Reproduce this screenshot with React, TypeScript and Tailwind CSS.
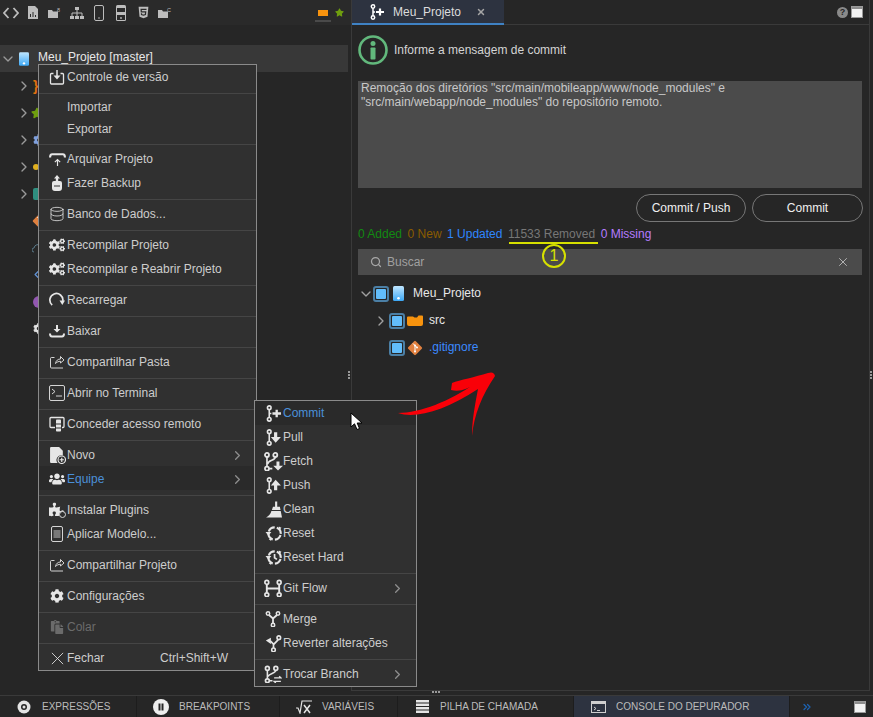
import React from "react";
import { ChevronRight, ChevronDown, ChevronsRight, Database, X, Search } from "lucide-react";
import { FaCogs, FaCog, FaUsers, FaPuzzlePiece, FaPaste, FaHtml5, FaStar } from "react-icons/fa";

const S = ({ children, size = 16, className = "" }: { children: React.ReactNode; size?: number; className?: string }) => (
  <svg width={size} height={size} viewBox="0 0 16 16" fill="none" stroke="currentColor" strokeWidth="1.3" className={`shrink-0 ${className}`}>
    {children}
  </svg>
);
const N = ({ x, y }: { x: number; y: number }) => <circle cx={x} cy={y} r="1.7" strokeWidth="1.5" />;
const Filled = ({ d }: { d: string }) => <path d={d} fill="currentColor" stroke="none" />;

const GitCommit = ({ size = 17 }: { size?: number }) => (
  <S size={size}><N x={4} y={2.5} /><N x={4} y={13.5} /><path d="M4 4.200v7.600M4 8h2" strokeWidth="1.500" /><path d="M7 8h8M11 4.500v7" strokeWidth="2.200" /></S>
);
const GitPull = () => (
  <S size={17}><N x={4} y={2.5} /><N x={4} y={13.5} /><path d="M4 4.200v7.600" strokeWidth="1.500" /><Filled d="M8.500 3h3v4.500H15L10 13 5.500 7.500h3z" /></S>
);
const GitPush = () => (
  <S size={17}><N x={4} y={2.5} /><N x={4} y={13.5} /><path d="M4 4.200v7.600" strokeWidth="1.500" /><Filled d="M10 2.500l5 5.500h-3.500v4.500h-3V8H5.500z" /></S>
);
const GitFetch = () => (
  <S size={19}><N x={2.5} y={2.5} /><N x={2.5} y={14} /><N x={9.500} y={2.5} /><path d="M2.500 4.200v8.100M4.300 14H7M9.500 4.200c0 3.500-6 2-6.500 6" strokeWidth="1.400" /><Filled d="M10.500 8h2.500v3.500H16l-4.200 4-4-4h2.700z" /></S>
);
const Broom = () => (
  <S size={17}><Filled d="M9.500 .5h2v5h2.500l.6 3H6.500L7.500 5.500h2zM6 9.500h8.800L16 15.500H1C3.500 14 5.500 12.500 6 9.500z" /></S>
);
const Reset = ({ hard }: { hard?: boolean }) => (
  <S size={17}>
    <circle cx="9" cy="8" r="5.800" strokeWidth="2" strokeDasharray="7 2.100" transform="rotate(15 9 8)" />
    <Filled d="M.5 6.500h5.500L3.200 10zM13 1.500l2.500 1-2 2.500zM6 12l-.2 3-2.300-1.500z" />
    {hard && <path d="M9 4.800v3.400l2.200 1.600" strokeWidth="1.600" />}
  </S>
);
const GitFlowI = () => (
  <S size={18}><N x={2.5} y={3} /><N x={2.5} y={14} /><N x={13.5} y={3} /><N x={13.5} y={14} /><path d="M2.500 4.700v7.600M13.500 4.700v7.600M2.500 8.500h11" strokeWidth="1.700" /></S>
);
const Merge = () => (
  <S><N x={3} y={2.5} /><N x={13} y={2.5} /><N x={8} y={14} /><path d="M4 4L8 7.500l4-3.500M8 7.500v4.800" strokeWidth="1.800" /></S>
);
const Revert = () => (
  <S size={17}><N x={13} y={2.500} /><N x={8} y={14} /><path d="M12.500 4.300L8 9v3.300M8 8.500L5 5.500" strokeWidth="1.600" /><Filled d="M5.500 2.500v6L.800 5.200z" /></S>
);
const Switch = () => (
  <S size={18}><N x={3} y={3} /><N x={3} y={14} /><N x={10.500} y={3} /><path d="M3 4.700v7.600M10.500 4.700c0 3-6 2.500-7 5.500M5 14h2.500" strokeWidth="1.400" /><path d="M9 11.500h6l-1.500-1.500M15 14.500H9l1.500 1.500" strokeWidth="1.200" /></S>
);

const ControleI = () => (
  <S size={16}><path d="M4.500 4.500H2.500a1 1 0 0 0-1 1V14a1 1 0 0 0 1 1h11a1 1 0 0 0 1-1V5.500a1 1 0 0 0-1-1H11.500" /><path d="M8 1v6" strokeWidth="1.500" /><Filled d="M4.500 6.500h7L8 10.500z" /></S>
);
const ArquivarI = () => (
  <S size={17}><path d="M1 6c0-2 .5-3 2-3h10c1.500 0 2 1 2 3" strokeWidth="2" /><path d="M8 8v6M5.500 10.500L8 8l2.500 2.500" strokeWidth="1.100" /></S>
);
const BackupI = () => (
  <S><Filled d="M8 0l3 3.500H9.200V6H11a2 2 0 0 1 2 2v5a3 3 0 0 1-3 3H6a3 3 0 0 1-3-3V8a2 2 0 0 1 2-2h1.800V3.500H5z" /><path d="M5 11h6" stroke="#303030" strokeWidth="1" /></S>
);
const ReloadI = () => (
  <S size={16}><path d="M3.200 13A6.500 6.500 0 1 1 13.800 9" strokeWidth="1.700" /><Filled d="M10.500 8.500h5.500l-2.700 4.500z" /></S>
);
const BaixarI = () => (
  <S><Filled d="M7 2h2v4h2.500L8 9.500 4.500 6H7z" /><path d="M1 10.500c0 2 .5 3 2 3h10c1.500 0 2-1 2-3" strokeWidth="2" /></S>
);
const ShareI = () => (
  <S size={16}><path d="M5.500 3.500H2.500a1 1 0 0 0-1 1V13a1 1 0 0 0 1 1h11.500" strokeWidth=".9" /><path d="M6.500 9.500C7 6.500 9 5 11.500 5V2.500l3.500 3.500-3.500 3V7.300C9.500 7.300 8 8 6.500 9.500z" strokeWidth=".9" /></S>
);
const TerminalI = () => (
  <S size={16}><rect x=".5" y=".5" width="15" height="15" rx="1.500" strokeWidth=".9" /><path d="M3 4l3 2.500L3 9M7 11h6" strokeWidth=".9" /></S>
);
const RemoteI = () => (
  <S size={16}><path d="M6 11.500H2a1 1 0 0 1-1-1V2.500a1 1 0 0 1 1-1h12a1 1 0 0 1 1 1v8a1 1 0 0 1-1 1h-1" strokeWidth="1.300" /><rect x="7" y="3.500" width="5" height="12" rx=".8" fill="currentColor" stroke="none" /><path d="M7 8h5M7 12h5" stroke="#303030" strokeWidth="1" /></S>
);
const NovoI = () => (
  <S size={17}><Filled d="M2 0h7.500L13 3.500V8a4.500 4.500 0 0 0-5 7H2a1 1 0 0 1-1-1V1a1 1 0 0 1 1-1z" /><circle cx="12" cy="12" r="3.500" strokeWidth="1.100" /><path d="M10 12h4M12 10v4" strokeWidth="1.100" /></S>
);
const PluginI = () => (
  <span className="relative shrink-0 w-[16px] h-[16px]">
    <FaPuzzlePiece size={15} />
    <span className="absolute right-[-1px] bottom-0 w-[7px] h-[7px] rounded-full border border-[#d8d8d8] bg-[#303030]" />
  </span>
);
const ModeloI = () => (
  <S size={16}><rect x="2.500" y=".5" width="11" height="15" rx="1.500" strokeWidth=".9" /><path d="M4.500 5h7M4.500 7h7M4.500 9h7M4.500 11h7" strokeWidth=".8" /></S>
);
const CloseI = () => <S size={15}><path d="M2 2l12 12M14 2L2 14" strokeWidth=".9" /></S>;

type Item = { label: string; icon?: React.ReactNode; blue?: boolean; arrow?: boolean; hover?: boolean; dim?: boolean; key2?: string; h?: string };

const Row = ({ item, sub }: { item: Item; sub?: boolean }) => (
  <div
    className={`flex items-center ${item.h ?? "h-[24px]"} ${sub ? "pl-[9px] pr-[12px]" : "pt-[2px] pl-[10px] pr-[12px]"} ${item.hover ? "bg-[#2a2a2a]" : ""} ${item.blue ? "text-[#4a90d9]" : item.dim ? "text-[#6b6b6b]" : "text-[#cdcdcd]"}`}
  >
    <span className={`flex items-center justify-center shrink-0 h-[18px] ${sub ? "w-[18px] mr-[1px]" : "w-[16px] mr-[2px]"} ${item.dim ? "text-[#6b6b6b]" : "text-[#e6e6e6]"}`}>{item.icon}</span>
    <span className="whitespace-nowrap flex-1">{item.label}</span>
    {item.key2 && <span className="mr-[16px] whitespace-nowrap">{item.key2}</span>}
    {item.arrow && <ChevronRight size={15} className="text-[#8f8f8f] mr-[-1px]" />}
  </div>
);

const Group = ({ items, first, last, sub }: { items: Item[]; first?: boolean; last?: boolean; sub?: boolean }) => (
  <div className={`${first ? "" : "border-t border-[#454545]"} ${first ? "" : sub ? "pt-[2px]" : "pt-[1px]"} ${last ? "" : sub ? "pb-[4px]" : first ? "pb-[6px]" : "pb-[5px]"}`}>
    {items.map((i) => <Row key={i.label} item={i} sub={sub} />)}
  </div>
);

const Checkbox = () => (
  <span className="flex items-center justify-center shrink-0 w-[16px] h-[16px] rounded-[3px] border-2 border-[#4b7fa5] bg-[#262626]">
    <span className="w-[10px] h-[10px] rounded-[1px] bg-[#62bdfb]" />
  </span>
);
const PhoneI = ({ w = 11, h = 15 }: { w?: number; h?: number }) => (
  <svg width={w} height={h} viewBox="0 0 11 15" className="shrink-0">
    <defs><linearGradient id="ph" x1="0" y1="0" x2="0" y2="1"><stop offset="0" stopColor="#bfe6ff" /><stop offset="1" stopColor="#3ba7f5" /></linearGradient></defs>
    <rect x="0" y="0" width="11" height="15" rx="1.500" fill="url(#ph)" />
    <circle cx="5.500" cy="12.300" r="1.300" fill="#fff" />
  </svg>
);
const FolderI = () => (
  <svg width="16" height="11" viewBox="0 0 16 11" className="shrink-0"><path d="M1 1.500h5l1.500 1H10l1.500-2H15a1 1 0 0 1 1 1V9a2 2 0 0 1-2 2H2a2 2 0 0 1-2-2V2.500a1 1 0 0 1 1-1z" fill="#f7930e" /></svg>
);
const GitDiamond = ({ size = 16 }: { size?: number }) => (
  <svg width={size} height={size} viewBox="0 0 16 16" className="shrink-0">
    <rect x="2.600" y="2.600" width="10.800" height="10.800" rx="1.200" transform="rotate(45 8 8)" fill="#e0803f" />
    <path d="M6 3.500l4 4M8 5.500v6" stroke="#fff" strokeWidth="1" /><circle cx="8" cy="11.500" r="1" fill="#fff" /><circle cx="10" cy="7.500" r="1" fill="#fff" /><circle cx="8" cy="5.500" r="1" fill="#fff" />
  </svg>
);
const WindowI = () => (
  <span className="block w-[10px] h-[10px] bg-[#f2f2f2] border-t-[2px] border-[#8d8d8d] shrink-0 outline outline-1 outline-[#9a9a9a]" />
);

const ToolIcon = ({ children }: { children: React.ReactNode }) => (
  <span className="flex items-center justify-center w-[22px] h-[22px] text-[#bdbdbd]">{children}</span>
);

const Cloudy = ({ label }: { label: string }) => (
  <svg width="14" height="12" viewBox="0 0 14 12">
    <path d="M0 3h4l1 1.500h5V11H0z" fill="currentColor" />
    <text x="9" y="5" fontSize="5.500" fill="currentColor" fontFamily="Liberation Sans">{label}</text>
  </svg>
);

const TreeRow = ({ icon, chev }: { icon: React.ReactNode; chev?: boolean }) => (
  <div className="flex items-center h-[27px] pl-[16px]">
    <span className="flex w-[16px] justify-center shrink-0">{chev && <ChevronRight size={16} strokeWidth={2} className="text-[#9a9a9a]" />}</span>
    <span className="flex items-center w-[14px]">{icon}</span>
  </div>
);

const BottomTab = ({ w, icon, label, active, pl }: { w: string; icon: React.ReactNode; label: string; active?: boolean; pl: string }) => (
  <div className={`flex items-center ${w} ${pl} border-r border-[#1d1d1d] ${active ? "bg-[#2d3340]" : ""}`}>
    <span className="flex items-center justify-center w-[18px] text-[#e4e4e4] shrink-0">{icon}</span>
    <span className="ml-[9px] whitespace-nowrap text-[10px] text-[#bcbcbc]">{label}</span>
  </div>
);

export default function App() {
  return (
    <div className="relative w-[873px] h-[717px] overflow-hidden flex flex-col bg-[#262626] text-[12px] leading-[14px] [font-family:Liberation_Sans,Arial,sans-serif] text-[#cdcdcd]">
      <div className="flex h-[695px]">
        {/* left panel */}
        <div className="w-[351px] shrink-0 flex flex-col">
          <div className="flex items-center h-[25px] bg-[#2a2a2a]">
            <ToolIcon><svg width="16" height="12" viewBox="0 0 16 12" fill="none" stroke="currentColor" strokeWidth="1.800"><path d="M5.500 1L1 6l4.500 5M10.500 1L15 6l-4.500 5" /></svg></ToolIcon>
            <ToolIcon><svg width="10" height="13" viewBox="0 0 10 13"><path d="M0 0h7l3 3v10H0z" fill="currentColor" /><path d="M2.500 11V8M5 11V6M7.500 11V9" stroke="#2a2a2a" strokeWidth="1" /></svg></ToolIcon>
            <ToolIcon><Cloudy label="8" /></ToolIcon>
            <ToolIcon><svg width="14" height="12" viewBox="0 0 14 12"><path d="M5 0h4v3H5zM0 9h4v3H0zM5 9h4v3H5zM10 9h4v3h-4z" fill="currentColor" /><path d="M7 3v6M2 9V6h10v3" stroke="currentColor" strokeWidth="1" fill="none" /></svg></ToolIcon>
            <ToolIcon><svg width="10" height="16" viewBox="0 0 10 16" fill="none"><rect x=".5" y=".5" width="9" height="15" rx="1.500" stroke="currentColor" /><circle cx="5" cy="13" r=".8" fill="currentColor" /></svg></ToolIcon>
            <ToolIcon><svg width="10" height="16" viewBox="0 0 10 16"><rect x="0" y="0" width="10" height="16" rx="1.500" fill="currentColor" /><rect x="1" y="3" width="8" height="4" fill="#2a2a2a" /><rect x="1" y="10" width="8" height="5" fill="#2a2a2a" /><circle cx="5" cy="13" r=".9" fill="currentColor" /></svg></ToolIcon>
            <ToolIcon><FaHtml5 size={13} /></ToolIcon>
            <ToolIcon><Cloudy label="C" /></ToolIcon>
            <div className="flex-1" />
            <span className="relative flex items-center justify-center w-[16px] h-[25px] mr-[1px]">
              <svg width="10" height="6" viewBox="0 0 10 6"><path d="M0 0h10v6H0z" fill="#f7930e" /></svg>
              <span className="absolute left-0 right-0 bottom-[3px] h-[2px] bg-[#4a4a4a]" />
            </span>
            <span className="flex items-center justify-center w-[14px] mr-[5px] text-[#6f9e0f]"><FaStar size={9} /></span>
          </div>
          <div className="h-[20px]" />
          <div className="flex items-center h-[27px] w-[348px] bg-[#383838]">
            <ChevronDown size={16} strokeWidth={2} className="text-[#9a9a9a]" />
            <span className="ml-[3px]"><PhoneI w={10} h={16} /></span>
            <span className="ml-[9px] text-[#e8e8e8] whitespace-nowrap mb-[3px]">Meu_Projeto [master]</span>
          </div>
          <TreeRow chev icon={<span className="ml-[1px] text-[#e07010] text-[14px] font-bold">{"}"}</span>} />
          <TreeRow chev icon={<FaStar size={12} className="text-[#6f9e0f] ml-[-1px]" />} />
          <TreeRow chev icon={<FaCog size={12} className="text-[#7f9fdc] ml-[1px]" />} />
          <TreeRow chev icon={<span className="ml-[1px] w-[6px] h-[6px] rounded-full bg-[#e0b020]" />} />
          <TreeRow chev icon={<span className="ml-[1px] w-[12px] h-[12px] rounded-[2px] bg-[#2f8f80]" />} />
          <TreeRow icon={<GitDiamond size={14} />} />
          <TreeRow icon={<svg width="12" height="10" viewBox="0 0 12 10" fill="none" stroke="#5a7a8a"><path d="M2 9a2 2 0 0 1 0-4 4 4 0 0 1 7-2" /></svg>} />
          <TreeRow icon={<ChevronRight size={11} strokeWidth={3} className="text-[#5f8fd0] rotate-180 ml-[-1px]" />} />
          <TreeRow icon={<span className="w-[12px] h-[12px] ml-[1px] rounded-full bg-[#9257b0]" />} />
          <TreeRow icon={<FaCog size={11} className="text-[#e0e0e0] ml-[1px]" />} />
        </div>

        {/* right panel */}
        <div className="w-[519px] shrink-0 h-[691px] flex flex-col border-l border-r border-b border-[#3a3a3a] bg-[#262626]">
          <div className="flex items-stretch h-[25px] border-b border-[#3a3a3a] shrink-0">
            <div className="flex items-center w-[152px] bg-[#2d3340] border-b-2 border-[#3f82c4] h-[25px] pl-[17px] text-[#dcdcdc]">
              <span className="text-white"><GitCommit size={16} /></span>
              <span className="ml-[8px] flex-1">Meu_Projeto</span>
              <X size={10} strokeWidth={3.500} className="text-[#a5a5a5] mr-[18px]" />
            </div>
            <div className="flex-1 flex items-center justify-end pr-[7px]">
              <span className="flex items-center justify-center w-[11px] h-[11px] rounded-full bg-[#8a8a8a] text-[#262626] text-[9px] font-bold mr-[4px]">?</span>
              <WindowI />
            </div>
          </div>
          <div className="flex flex-col px-[6px]">
            <div className="flex items-center h-[30px] mt-[10px]">
              <svg width="30" height="30" viewBox="0 0 30 30" className="shrink-0"><circle cx="15" cy="15" r="13.500" fill="none" stroke="#62b87c" strokeWidth="2.600" /><circle cx="15" cy="8.500" r="2.500" fill="#62b87c" /><rect x="12.500" y="12.500" width="5" height="12" rx=".8" fill="#62b87c" /></svg>
              <span className="ml-[6px] text-[#d4d4d4]">Informe a mensagem de commit</span>
            </div>
            <div className="mt-[16px] h-[107px] w-[504px] bg-[#4b4b4b] pl-[3px] text-[#c8c8c8]">
              Remoção dos diretórios "src/main/mobileapp/www/node_modules" e
              <br />
              "src/main/webapp/node_modules" do repositório remoto.
            </div>
            <div className="mt-[6px] flex justify-end gap-[6px] w-[505px]">
              <button className="w-[110px] h-[28px] rounded-full border border-[#777] text-[#f0f0f0]">Commit / Push</button>
              <button className="w-[111px] h-[28px] rounded-full border border-[#777] text-[#f0f0f0]">Commit</button>
            </div>
            <div className="mt-[5px] flex gap-[5.5px] whitespace-nowrap">
              <span className="text-[#128a12]">0 Added</span>
              <span className="text-[#8a5c00]">0 New</span>
              <span className="text-[#2f86ff]">1 Updated</span>
              <span className="text-[#777777]">11533 Removed</span>
              <span className="text-[#b57cff]">0 Missing</span>
            </div>
            <div className="mt-[8px] flex items-center w-[504px] h-[26px] bg-[#4b4b4b] pl-[12px] pr-[12px]">
              <Search size={12} strokeWidth={2.500} className="text-[#a8a8a8]" />
              <span className="ml-[5px] flex-1 text-[#a0a0a0]">Buscar</span>
              <X size={14} strokeWidth={1.500} className="text-[#c0c0c0]" />
            </div>
            <div className="mt-[5px]">
              <div className="flex items-center h-[27px]">
                <ChevronDown size={16} strokeWidth={2} className="text-[#a0a0a0] mr-[-1px]" />
                <Checkbox />
                <span className="ml-[4px]"><PhoneI /></span>
                <span className="ml-[9px] text-[#e8e8e8] mb-[1px]">Meu_Projeto</span>
              </div>
              <div className="flex items-center h-[27px] pl-[15px]">
                <ChevronRight size={16} strokeWidth={2} className="text-[#a0a0a0]" />
                <Checkbox />
                <span className="ml-[2px]"><FolderI /></span>
                <span className="ml-[6px] text-[#e8e8e8] mb-[1px]">src</span>
              </div>
              <div className="flex items-center h-[27px] pl-[31px]">
                <Checkbox />
                <span className="ml-[2px]"><GitDiamond /></span>
                <span className="ml-[6px] text-[#3b8aff] mb-[1px]">.gitignore</span>
              </div>
            </div>
          </div>
        </div>
      </div>

      {/* bottom bar */}
      <div className="flex h-[22px] border-t border-[#3a3a3a] bg-[#262626]">
        <BottomTab w="w-[137px]" pl="pl-[15px]" label="EXPRESSÕES" icon={<svg width="16" height="14" viewBox="0 0 16 14"><circle cx="8" cy="7" r="6.500" fill="#e4e4e4" /><circle cx="8" cy="7" r="3" fill="#262626" /><circle cx="8" cy="7" r="1.500" fill="#e4e4e4" /></svg>} />
        <BottomTab w="w-[143px]" pl="pl-[15px]" label="BREAKPOINTS" icon={<svg width="16" height="16" viewBox="0 0 16 16"><circle cx="8" cy="8" r="8" fill="#eee" /><path d="M5.500 4.500h2v7h-2zM8.500 4.500h2v7h-2z" fill="#262626" /></svg>} />
        <BottomTab w="w-[118px]" pl="pl-[15px]" label="VARIÁVEIS" icon={<svg width="16" height="14" viewBox="0 0 16 14" fill="none" stroke="currentColor"><path d="M0 8l2 0 2 5 2-12h10" strokeWidth="1.200" /><path d="M8 5l6 8M14 5l-6 8" strokeWidth="1.500" /></svg>} />
        <BottomTab w="w-[176px]" pl="pl-[15px]" label="PILHA DE CHAMADA" icon={<svg width="13" height="13" viewBox="0 0 13 13"><path d="M0 0h13v2.500H0zM0 3.500h13V6H0zM0 7h13v2.500H0zM0 10.500h13V13H0z" fill="#e4e4e4" /></svg>} />
        <BottomTab w="w-[216px]" pl="pl-[15px]" active label="CONSOLE DO DEPURADOR" icon={<svg width="15" height="12" viewBox="0 0 15 12" fill="none"><rect x=".5" y=".5" width="14" height="11" stroke="#cfcfcf" /><path d="M0 0h15v3H0z" fill="#cfcfcf" /><path d="M3 6l2 1.500L3 9M6 9.500h3" stroke="#cfcfcf" /></svg>} />
        <div className="flex-1 flex items-center justify-between pl-[11px] pr-[8px]">
          <ChevronsRight size={12} strokeWidth={2.500} className="text-[#1d62b0]" />
          <WindowI />
        </div>
      </div>

      {/* splitter grips */}
      <span className="absolute left-[348px] top-[371px] flex flex-col gap-[1px]"><i className="block w-[2px] h-[2px] bg-[#999]" /><i className="block w-[2px] h-[2px] bg-[#999]" /><i className="block w-[2px] h-[2px] bg-[#999]" /></span>
      <span className="absolute left-[870px] top-[371px] flex flex-col gap-[1px]"><i className="block w-[2px] h-[2px] bg-[#999]" /><i className="block w-[2px] h-[2px] bg-[#999]" /><i className="block w-[2px] h-[2px] bg-[#999]" /></span>
      <span className="absolute left-[432px] top-[691px] flex gap-[1px]"><i className="block w-[2px] h-[2px] bg-[#999]" /><i className="block w-[2px] h-[2px] bg-[#999]" /><i className="block w-[2px] h-[2px] bg-[#999]" /></span>

      {/* annotation */}
      <span className="absolute left-[509px] top-[242px] w-[89px] h-[2px] bg-[#d6e000]" />
      <span className="absolute left-[542px] top-[244px] flex items-center justify-center w-[24px] h-[24px] rounded-full border-2 border-[#d6e000] text-[#d6e000] text-[16px] font-normal">1</span>

      {/* main context menu */}
      <div className="absolute left-[38px] top-[64px] w-[219px] bg-[#303030] border border-[#8a8a8a] pb-[1px]">
        <Group first items={[{ label: "Controle de versão", h: "h-[22px]", icon: <ControleI /> }]} />
        <Group items={[{ label: "Importar", h: "h-[22px]" }, { label: "Exportar", h: "h-[22px]" }]} />
        <Group items={[{ label: "Arquivar Projeto", icon: <ArquivarI /> }, { label: "Fazer Backup", icon: <BackupI /> }]} />
        <Group items={[{ label: "Banco de Dados...", icon: <Database size={16} strokeWidth={1.200} /> }]} />
        <Group items={[{ label: "Recompilar Projeto", icon: <FaCogs size={16} /> }, { label: "Recompilar e Reabrir Projeto", icon: <FaCogs size={16} /> }]} />
        <Group items={[{ label: "Recarregar", icon: <ReloadI /> }]} />
        <Group items={[{ label: "Baixar", icon: <BaixarI /> }]} />
        <Group items={[{ label: "Compartilhar Pasta", icon: <ShareI /> }]} />
        <Group items={[{ label: "Abrir no Terminal", icon: <TerminalI /> }]} />
        <Group items={[{ label: "Conceder acesso remoto", icon: <RemoteI /> }]} />
        <Group items={[{ label: "Novo", arrow: true, icon: <NovoI /> }, { label: "Equipe", arrow: true, blue: true, hover: true, icon: <FaUsers size={16} /> }]} />
        <Group items={[{ label: "Instalar Plugins", icon: <PluginI /> }, { label: "Aplicar Modelo...", icon: <ModeloI /> }]} />
        <Group items={[{ label: "Compartilhar Projeto", icon: <ShareI /> }]} />
        <Group items={[{ label: "Configurações", icon: <FaCog size={14} /> }]} />
        <Group items={[{ label: "Colar", dim: true, icon: <FaPaste size={14} /> }]} />
        <Group last items={[{ label: "Fechar", key2: "Ctrl+Shift+W", icon: <CloseI /> }]} />
      </div>

      {/* sub menu */}
      <div className="absolute left-[254px] top-[400px] w-[163px] bg-[#303030] border border-[#8a8a8a]">
        <Group first sub items={[
          { label: "Commit", blue: true, hover: true, icon: <GitCommit /> },
          { label: "Pull", icon: <GitPull /> },
          { label: "Fetch", icon: <GitFetch /> },
          { label: "Push", icon: <GitPush /> },
          { label: "Clean", icon: <Broom /> },
          { label: "Reset", icon: <Reset /> },
          { label: "Reset Hard", icon: <Reset hard /> },
        ]} />
        <Group sub items={[{ label: "Git Flow", arrow: true, icon: <GitFlowI /> }]} />
        <Group sub items={[{ label: "Merge", icon: <Merge /> }, { label: "Reverter alterações", icon: <Revert /> }]} />
        <Group sub last items={[{ label: "Trocar Branch", arrow: true, icon: <Switch /> }]} />
      </div>

      {/* cursor */}
      <svg width="13" height="19" viewBox="0 0 13 19" className="absolute left-[350px] top-[412px]">
        <path d="M1 1v14l3.500-3.200L7 17.500l2.500-1L7.200 11H12z" fill="#fff" stroke="#000" strokeWidth="1" />
      </svg>

      {/* red arrow */}
      <svg width="115" height="80" viewBox="0 0 115 80" className="absolute left-[390px] top-[365px]">
        <path d="M8 48C25 54 55 46 88 24C85 40 82 55 82 71C84 50 92 30 105 11Q104 6 98 8C85 12 70 15 62 18L61 25C70 27 78 24 84 19C60 36 30 48 8 48Z" fill="#f90008" />
      </svg>
    </div>
  );
}
